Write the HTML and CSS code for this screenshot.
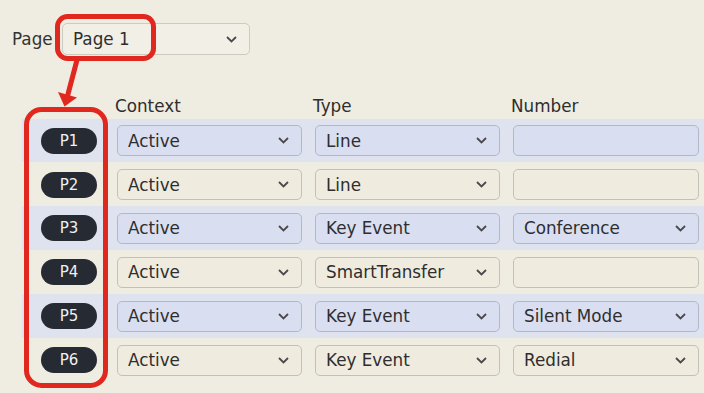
FILE: index.html
```html
<!DOCTYPE html>
<html>
<head>
<meta charset="utf-8">
<link rel="stylesheet" href="styles.css">
</head>
<body>
<div class="screen">
  <div class="page-row">
    <span class="label">Page</span>
    <div class="sel page-sel"><span>Page 1</span><svg class="chev" viewBox="0 0 11 7"><polyline points="1,1 5.5,5.5 10,1"/></svg></div>
  </div>

  <div class="row head">
    <div></div>
    <div class="hd">Context</div>
    <div class="hd">Type</div>
    <div class="hd">Number</div>
  </div>

  <div class="row blue">
    <div class="pill">P1</div>
    <div class="sel"><span>Active</span><svg class="chev" viewBox="0 0 11 7"><polyline points="1,1 5.5,5.5 10,1"/></svg></div>
    <div class="sel"><span>Line</span><svg class="chev" viewBox="0 0 11 7"><polyline points="1,1 5.5,5.5 10,1"/></svg></div>
    <div class="sel"></div>
  </div>
  <div class="row beige">
    <div class="pill">P2</div>
    <div class="sel"><span>Active</span><svg class="chev" viewBox="0 0 11 7"><polyline points="1,1 5.5,5.5 10,1"/></svg></div>
    <div class="sel"><span>Line</span><svg class="chev" viewBox="0 0 11 7"><polyline points="1,1 5.5,5.5 10,1"/></svg></div>
    <div class="sel"></div>
  </div>
  <div class="row blue">
    <div class="pill">P3</div>
    <div class="sel"><span>Active</span><svg class="chev" viewBox="0 0 11 7"><polyline points="1,1 5.5,5.5 10,1"/></svg></div>
    <div class="sel"><span>Key Event</span><svg class="chev" viewBox="0 0 11 7"><polyline points="1,1 5.5,5.5 10,1"/></svg></div>
    <div class="sel"><span>Conference</span><svg class="chev" viewBox="0 0 11 7"><polyline points="1,1 5.5,5.5 10,1"/></svg></div>
  </div>
  <div class="row beige">
    <div class="pill">P4</div>
    <div class="sel"><span>Active</span><svg class="chev" viewBox="0 0 11 7"><polyline points="1,1 5.5,5.5 10,1"/></svg></div>
    <div class="sel"><span>SmartTransfer</span><svg class="chev" viewBox="0 0 11 7"><polyline points="1,1 5.5,5.5 10,1"/></svg></div>
    <div class="sel"></div>
  </div>
  <div class="row blue">
    <div class="pill">P5</div>
    <div class="sel"><span>Active</span><svg class="chev" viewBox="0 0 11 7"><polyline points="1,1 5.5,5.5 10,1"/></svg></div>
    <div class="sel"><span>Key Event</span><svg class="chev" viewBox="0 0 11 7"><polyline points="1,1 5.5,5.5 10,1"/></svg></div>
    <div class="sel"><span>Silent Mode</span><svg class="chev" viewBox="0 0 11 7"><polyline points="1,1 5.5,5.5 10,1"/></svg></div>
  </div>
  <div class="row beige">
    <div class="pill">P6</div>
    <div class="sel"><span>Active</span><svg class="chev" viewBox="0 0 11 7"><polyline points="1,1 5.5,5.5 10,1"/></svg></div>
    <div class="sel"><span>Key Event</span><svg class="chev" viewBox="0 0 11 7"><polyline points="1,1 5.5,5.5 10,1"/></svg></div>
    <div class="sel"><span>Redial</span><svg class="chev" viewBox="0 0 11 7"><polyline points="1,1 5.5,5.5 10,1"/></svg></div>
  </div>

  <svg class="annot" viewBox="0 0 704 393" width="704" height="393">
    <rect x="57.5" y="16.5" width="96" height="42" rx="10" ry="10"/>
    <line x1="77" y1="60" x2="67.5" y2="96"/>
    <polygon points="58,92 77,97.5 64.5,106.5"/>
    <rect x="26.5" y="109.5" width="79" height="276" rx="15" ry="15"/>
  </svg>
</div>
</body>
</html>
```

FILE: styles.css
```css
* { box-sizing: border-box; }
html, body {
  margin: 0;
  padding: 0;
  background: #efece1;
}
.screen {
  position: relative;
  width: 704px;
  height: 393px;
  overflow: hidden;
  font-family: "DejaVu Sans", Verdana, sans-serif;
  font-size: 16.8px;
  color: #2e2e2e;
  padding-top: 23px;
}
.page-row {
  display: flex;
  align-items: center;
  height: 32px;
  padding-left: 12px;
}
.label {
  width: 50px;
  color: #333;
}
.sel {
  display: flex;
  align-items: center;
  justify-content: space-between;
  height: 31px;
  border: 1px solid #c3c0b5;
  border-radius: 5px;
  padding: 0 12px 0 10px;
  background: #efebdf;
  white-space: nowrap;
}
.page-sel {
  width: 188px;
  height: 32px;
  background: #f1efe6;
  border-color: #cdcabf;
}
.chev {
  width: 11px;
  height: 7px;
  flex: none;
}
.chev polyline {
  fill: none;
  stroke: #4a4a4a;
  stroke-width: 1.8;
}
.row {
  display: grid;
  grid-template-columns: 82px 185px 185px 186px;
  column-gap: 13px;
  align-items: center;
  margin-left: 22px;
  padding-top: 0.5px;
  height: 43.9px;
}
.row.head {
  height: 63.5px;
  align-items: end;
  padding-bottom: 3px;
}
.hd {
  margin-left: -2px;
}
.row.blue { background: #dfe3ef; }
.row.blue .sel {
  background: #d9def1;
  border-color: #b3b8c9;
}
.row.beige { background: #efece1; }
.pill {
  margin-left: 19px;
  width: 56px;
  height: 26px;
  border-radius: 13px;
  background: #262a33;
  color: #f0f0f0;
  font-size: 15px;
  display: flex;
  align-items: center;
  justify-content: center;
}
.annot {
  position: absolute;
  left: 0;
  top: 0;
  pointer-events: none;
}
.annot rect, .annot line {
  fill: none;
  stroke: #e0281f;
  stroke-width: 5;
}
.annot polygon {
  fill: #e0281f;
}
```
